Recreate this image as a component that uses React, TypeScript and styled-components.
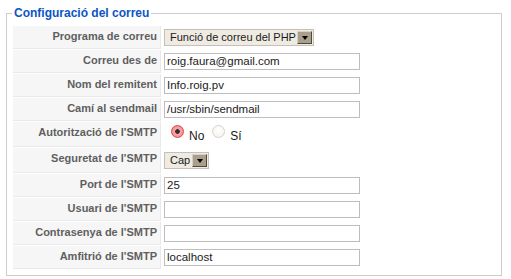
import React from "react";
import styled, { createGlobalStyle } from "styled-components";

const Global = createGlobalStyle`
  html, body { margin: 0; padding: 0; background: #fff; }
  body { font-family: "Liberation Sans", Arial, sans-serif; }
`;

const Fieldset = styled.fieldset`
  box-sizing: border-box;
  width: 496px;
  margin: 6px 0 0 6px;
  padding: 5px 5px 6px 5px;
  border: 1px solid #cccccc;
  min-width: 0;
`;

const Legend = styled.legend`
  padding: 0 2px;
  font: bold 12px/14px "Liberation Sans", Arial, sans-serif;
  color: #0b55c4;
`;

const Table = styled.div`
  display: grid;
  grid-template-columns: 148px 1fr;
  row-gap: 1px;
  margin-top: 1px;
  margin-left: 1px;
`;

const Key = styled.div<{ $h: number }>`
  box-sizing: border-box;
  height: ${(p) => p.$h}px;
  background: #f6f6f6;
  border-bottom: 1px solid #e9e9e9;
  border-right: 1px solid #e9e9e9;
  text-align: right;
  padding: 4px 3px 0 0;
  font: bold 11px/13px "Liberation Sans", Arial, sans-serif;
  color: #5f5f5f;
`;

const Value = styled.div<{ $h: number }>`
  box-sizing: border-box;
  height: ${(p) => p.$h}px;
  display: flex;
  align-items: center;
  padding-left: 3px;
`;

const TextBox = styled.div`
  box-sizing: border-box;
  width: 196px;
  height: 17px;
  border: 1px solid #bdbdbd;
  background: #fff;
  padding: 0 2px;
  font: 11.5px/15px "Liberation Sans", Arial, sans-serif;
  color: #1a1a1a;
  white-space: nowrap;
  overflow: hidden;
`;

const SelectBox = styled.div<{ $w: number }>`
  box-sizing: border-box;
  width: ${(p) => p.$w}px;
  height: 17px;
  border: 1px solid #c4c0b8;
  background: #efebe3;
  display: flex;
  align-items: center;
  justify-content: space-between;
  padding: 0 1px 0 5px;
  font: 11px/15px "Liberation Sans", Arial, sans-serif;
  color: #1a1a1a;
  white-space: nowrap;
`;

const DropButton = styled.span`
  box-sizing: border-box;
  width: 15px;
  height: 13px;
  background: #aa9f8c;
  border-top: 1px solid #d7d0c4;
  border-left: 1px solid #d7d0c4;
  border-right: 1px solid #4f473c;
  border-bottom: 1px solid #4f473c;
  display: flex;
  align-items: center;
  justify-content: center;
`;

const Arrow = styled.span`
  width: 0;
  height: 0;
  border-left: 3.5px solid transparent;
  border-right: 3.5px solid transparent;
  border-top: 4px solid #000;
`;

const RadioGroup = styled.div`
  display: flex;
  align-items: center;
  padding-left: 7px;
  font: 12px/14px "Liberation Sans", Arial, sans-serif;
  color: #1a1a1a;
`;

const Radio = styled.span<{ $on?: boolean }>`
  box-sizing: border-box;
  width: 13px;
  height: 13px;
  border-radius: 50%;
  border: 1px solid ${(p) => (p.$on ? "#d9434b" : "#d8d2c8")};
  background: ${(p) =>
    p.$on
      ? "radial-gradient(circle at 50% 50%, #3a2a2a 0 2px, #f6a9aa 2.6px, #ee7f84 100%)"
      : "radial-gradient(circle at 50% 35%, #ffffff 0, #f4f1ec 100%)"};
  margin: 0 5px 6px 0;
`;

const RadioText = styled.span<{ $gap?: number }>`
  margin-right: ${(p) => p.$gap ?? 0}px;
  padding-top: 2px;
`;

type Row = {
  label: string;
  h: number;
  kind: "text" | "select" | "radio";
  value?: string;
  w?: number;
};

const rows: Row[] = [
  { label: "Programa de correu", h: 23, kind: "select", value: "Funció de correu del PHP", w: 150 },
  { label: "Correu des de", h: 23, kind: "text", value: "roig.faura@gmail.com" },
  { label: "Nom del remitent", h: 23, kind: "text", value: "Info.roig.pv" },
  { label: "Camí al sendmail", h: 23, kind: "text", value: "/usr/sbin/sendmail" },
  { label: "Autorització de l'SMTP", h: 25, kind: "radio" },
  { label: "Seguretat de l'SMTP", h: 25, kind: "select", value: "Cap", w: 45 },
  { label: "Port de l'SMTP", h: 23, kind: "text", value: "25" },
  { label: "Usuari de l'SMTP", h: 23, kind: "text", value: "" },
  { label: "Contrasenya de l'SMTP", h: 23, kind: "text", value: "" },
  { label: "Amfitrió de l'SMTP", h: 23, kind: "text", value: "localhost" },
];

export default function App() {
  return (
    <>
      <Global />
      <Fieldset>
        <Legend>Configuració del correu</Legend>
        <Table>
          {rows.map((r) => (
            <React.Fragment key={r.label}>
              <Key $h={r.h}>{r.label}</Key>
              <Value $h={r.h}>
                {r.kind === "text" && <TextBox>{r.value}</TextBox>}
                {r.kind === "select" && (
                  <SelectBox $w={r.w ?? 150}>
                    <span>{r.value}</span>
                    <DropButton>
                      <Arrow />
                    </DropButton>
                  </SelectBox>
                )}
                {r.kind === "radio" && (
                  <RadioGroup>
                    <Radio $on />
                    <RadioText $gap={8}>No</RadioText>
                    <Radio />
                    <RadioText>Sí</RadioText>
                  </RadioGroup>
                )}
              </Value>
            </React.Fragment>
          ))}
        </Table>
      </Fieldset>
    </>
  );
}
